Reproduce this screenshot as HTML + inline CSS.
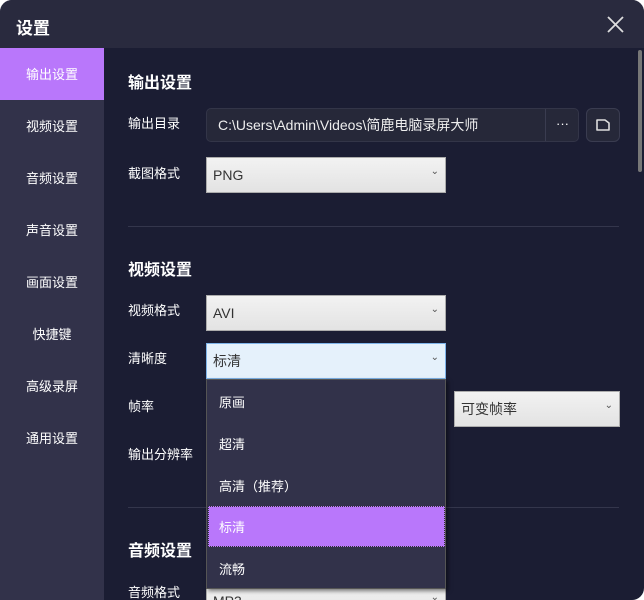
<!DOCTYPE html><html><head><meta charset="utf-8"><style>
*{margin:0;padding:0;box-sizing:border-box}
body{width:644px;height:600px;overflow:hidden;background:#fff;font-family:"Liberation Sans","Noto Sans CJK SC",sans-serif;color:#fff}
.win{position:absolute;left:0;top:0;width:644px;height:600px;background:#1b1d33;border-radius:12px 12px 12px 0;overflow:hidden}
.tb{position:absolute;left:0;top:0;width:644px;height:48px;background:#292a3e}
.a{position:absolute;white-space:nowrap}
.side{position:absolute;left:0;top:48px;width:104px;height:552px;background:#32324a}
.si{position:absolute;left:0;width:104px;height:52px;line-height:54px;text-align:center;font-size:13px}
.lab{position:absolute;left:128px;font-size:13px;line-height:16px}
.h{position:absolute;left:128px;font-size:16px;font-weight:bold;line-height:20px}
.sel{position:absolute;background:linear-gradient(#f2f2f2,#e3e3e3);border:1px solid #acacac;color:#333;font-size:14px;padding-left:6px;display:flex;align-items:center}
.sel:after{content:"⌄";position:absolute;right:6px;top:8px;font-size:10px;color:#555}
.hr{position:absolute;left:128px;width:491px;height:1px;background:#34364c}
.dd{position:absolute;left:206px;top:379px;width:240px;height:210px;background:#32324a;border:1px solid #555;box-shadow:2px 2px 4px rgba(0,0,0,.5)}
.it{position:absolute;left:12px;font-size:13px;line-height:16px}
</style></head><body><div class="win">
<div class="tb"></div>
<div class="a" style="left:16px;top:14px;font-size:17px;font-weight:bold">设置</div>
<svg class="a" style="left:606px;top:15px" width="19" height="19"><path d="M2 2L17 17M17 2L2 17" stroke="#ddd" stroke-width="1.8"/></svg>
<div class="side">
<div class="si" style="top:0;background:#b977fb">输出设置</div>
<div class="si" style="top:52px">视频设置</div>
<div class="si" style="top:104px">音频设置</div>
<div class="si" style="top:156px">声音设置</div>
<div class="si" style="top:208px">画面设置</div>
<div class="si" style="top:260px">快捷键</div>
<div class="si" style="top:312px">高级录屏</div>
<div class="si" style="top:364px">通用设置</div>
</div>
<div class="a" style="left:638px;top:50px;width:4px;height:122px;background:#777;border-radius:2px"></div>
<div class="h" style="top:74px">输出设置</div>
<div class="lab" style="top:116px">输出目录</div>
<div class="a" style="left:206px;top:108px;width:373px;height:34px;background:#262839;border:1px solid #333548;border-radius:5px"></div>
<div class="a" style="left:545px;top:109px;width:1px;height:32px;background:#3a3c50"></div>
<div class="a" style="left:218px;top:116px;font-size:14px;line-height:18px;color:#eee">C:\Users\Admin\Videos\简鹿电脑录屏大师</div>
<div class="a" style="left:556px;top:116px;font-size:13px">···</div>
<div class="a" style="left:586px;top:108px;width:34px;height:34px;background:#262839;border:1px solid #3a3c50;border-radius:6px"></div>
<svg class="a" style="left:594px;top:116px" width="18" height="18"><path d="M3 4h8l4 3v7H3z" fill="none" stroke="#ddd" stroke-width="1.6" stroke-linejoin="round"/></svg>
<div class="lab" style="top:166px">截图格式</div>
<div class="sel" style="left:206px;top:157px;width:240px;height:36px">PNG</div>
<div class="hr" style="top:226px"></div>
<div class="h" style="top:261px">视频设置</div>
<div class="lab" style="top:303px">视频格式</div>
<div class="sel" style="left:206px;top:295px;width:240px;height:36px">AVI</div>
<div class="lab" style="top:351px">清晰度</div>
<div class="sel" style="left:206px;top:343px;width:240px;height:36px;background:#e5f1fb;border-color:#7eb4ea">标清</div>
<div class="lab" style="top:399px">帧率</div>
<div class="sel" style="left:454px;top:391px;width:166px;height:36px">可变帧率</div>
<div class="lab" style="top:447px">输出分辨率</div>
<div class="hr" style="top:507px"></div>
<div class="h" style="top:542px">音频设置</div>
<div class="lab" style="top:585px">音频格式</div>
<div class="sel" style="left:206px;top:583px;width:240px;height:36px">MP3</div>
<div class="dd">
<div class="it" style="top:15px">原画</div>
<div class="it" style="top:57px">超清</div>
<div class="it" style="top:99px">高清（推荐）</div>
<div class="a" style="left:1px;top:126px;width:237px;height:41px;background:#b977fb;border:1px dotted #333"></div>
<div class="it" style="top:140px">标清</div>
<div class="it" style="top:182px">流畅</div>
</div>
</div></body></html>
